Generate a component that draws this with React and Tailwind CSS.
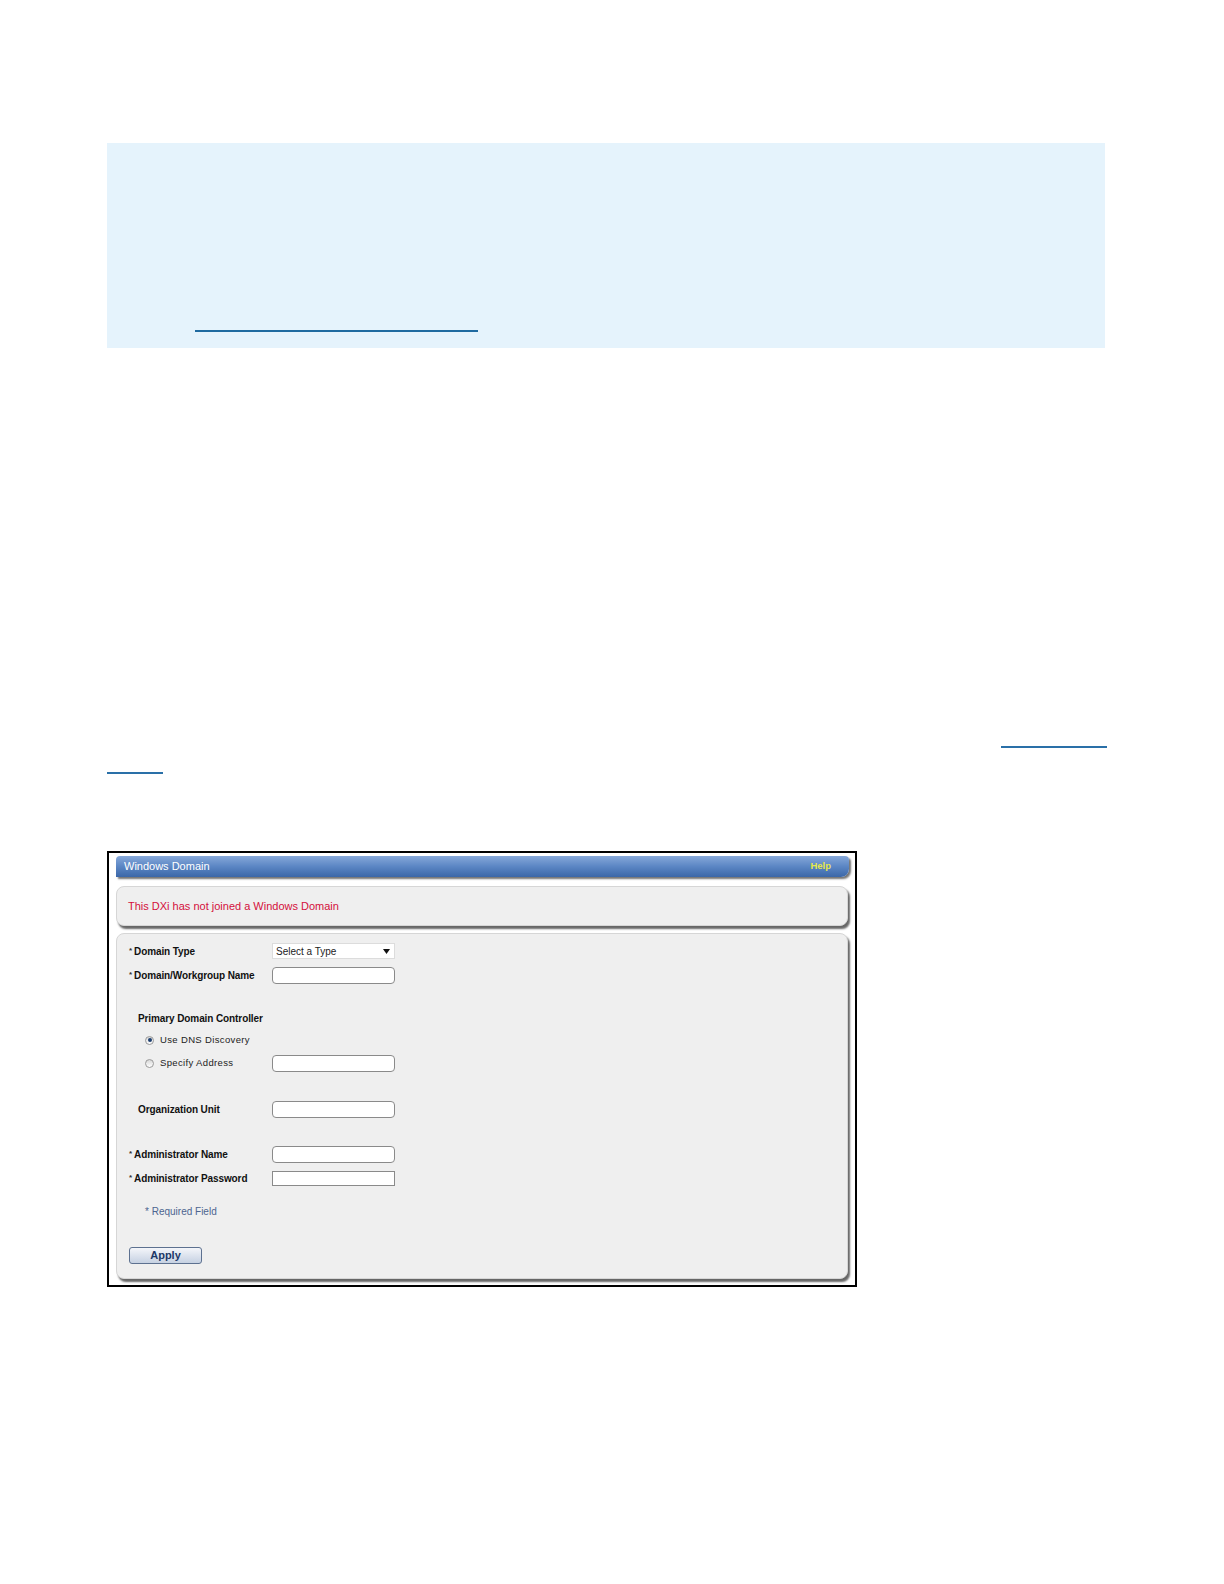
import React from "react";

const font = { fontFamily: '"Liberation Sans", Arial, sans-serif' };

const Star = () => (
    <span className="text-[8px] text-[#333] mr-[2px] relative -top-[2px]">*</span>
);

const TextBox = ({ square }) => (
    <div
        className={
            "w-[123px] h-[17px] bg-white border border-[#8a8a8a] " +
            (square ? "" : "rounded-[4px]")
        }
    />
);

const Radio = ({ checked }) => (
    <div className="w-[9px] h-[9px] rounded-full border border-[#9a9a9a] bg-gradient-to-b from-[#d8d8d8] to-white flex items-center justify-center">
        {checked && <div className="w-[4px] h-[4px] rounded-full bg-[#1e3f70]" />}
    </div>
);

const Row = ({ label, star, indent, children, className }) => (
    <div className={"flex items-center " + className}>
        <div
            className={
                "w-[143px] text-[10px] font-bold text-[#111] tracking-[-0.1px] " +
                (indent ? "pl-[9px]" : "")
            }>
            {star && <Star />}
            {label}
        </div>
        {children}
    </div>
);

const WindowsDomain = () => {
    return (
        <div className="ml-[107px] mt-[77px] w-[750px] h-[436px] border-2 border-black bg-white px-[7px] pt-[3px]" style={font}>
            <div className="w-[733px] h-[21px] rounded-t-[4px] rounded-br-[8px] bg-gradient-to-b from-[#86a8d9] via-[#5b86c4] to-[#3b67a8] shadow-[2px_2px_2px_rgba(0,0,0,0.55)] flex items-center justify-between pl-[8px] pr-[18px]">
                <span className="text-[11px] text-white">Windows Domain</span>
                <span className="text-[9.5px] font-bold text-[#e6e84a]">Help</span>
            </div>
            <div className="mt-[9px] w-[732px] h-[40px] rounded-[8px] border border-[#d6d6d6] bg-[#efefef] shadow-[2px_3px_2px_rgba(0,0,0,0.6)] flex items-center pl-[11px]">
                <span className="text-[11px] text-[#d4103c]">
                    This DXi has not joined a Windows Domain
                </span>
            </div>
            <div className="mt-[7px] w-[732px] h-[346px] rounded-[8px] border border-[#d6d6d6] bg-[#efefef] shadow-[2px_3px_2px_rgba(0,0,0,0.6)] pl-[12px]">
                <Row label="Domain Type" star className="mt-[9px] h-[16px]">
                    <div className="w-[123px] h-[16px] bg-white border border-[#dcdcdc] flex items-center justify-between pl-[3px] pr-[4px]">
                        <span className="text-[10px] text-[#222]">Select a Type</span>
                        <svg width="7" height="5" viewBox="0 0 7 5">
                            <path d="M0 0 L7 0 L3.5 5 Z" fill="#111" />
                        </svg>
                    </div>
                </Row>
                <Row label="Domain/Workgroup Name" star className="mt-[8px] h-[17px]">
                    <TextBox />
                </Row>
                <div className="mt-[27px] h-[14px] flex items-center pl-[9px] text-[10px] font-bold text-[#111] tracking-[-0.1px]">
                    Primary Domain Controller
                </div>
                <div className="mt-[8px] h-[14px] flex items-center pl-[16px]">
                    <Radio checked />
                    <span className="ml-[6px] text-[9.5px] text-[#222] tracking-[0.35px]">
                        Use DNS Discovery
                    </span>
                </div>
                <div className="mt-[8px] h-[17px] flex items-center">
                    <div className="w-[143px] flex items-center pl-[16px]">
                        <Radio />
                        <span className="ml-[6px] text-[9.5px] text-[#222] tracking-[0.35px]">
                            Specify Address
                        </span>
                    </div>
                    <TextBox />
                </div>
                <Row label="Organization Unit" indent className="mt-[29px] h-[17px]">
                    <TextBox />
                </Row>
                <Row label="Administrator Name" star className="mt-[28px] h-[17px]">
                    <TextBox />
                </Row>
                <Row label="Administrator Password" star className="mt-[8px] h-[15px]">
                    <div className="w-[123px] h-[15px] bg-white border border-[#8a8a8a]" />
                </Row>
                <div className="mt-[18px] h-[14px] flex items-center pl-[16px] text-[10px] text-[#4d6590]">
                    * Required Field
                </div>
                <button className="mt-[29px] w-[73px] h-[17px] rounded-[3px] border border-[#5d7190] bg-gradient-to-b from-[#f4f6fa] to-[#c6d1e2] flex items-center justify-center">
                    <span className="text-[11px] font-bold text-[#1c3867]">Apply</span>
                </button>
            </div>
        </div>
    );
};

const App = () => {
    return (
        <div className="w-[1224px] min-h-[1584px] bg-white flex flex-col" style={font}>
            <div className="mt-[143px] ml-[107px] w-[998px] h-[205px] bg-[#e5f3fc] pt-[187px] pl-[88px]">
                <div className="w-[283px] h-[2px] bg-[#1f6aa0]" />
            </div>
            <div className="mt-[398px] ml-[1001px] w-[106px] h-[2px] bg-[#2a70a8]" />
            <div className="mt-[24px] ml-[107px] w-[56px] h-[2px] bg-[#2a70a8]" />
            <WindowsDomain />
        </div>
    );
};

export default App;
